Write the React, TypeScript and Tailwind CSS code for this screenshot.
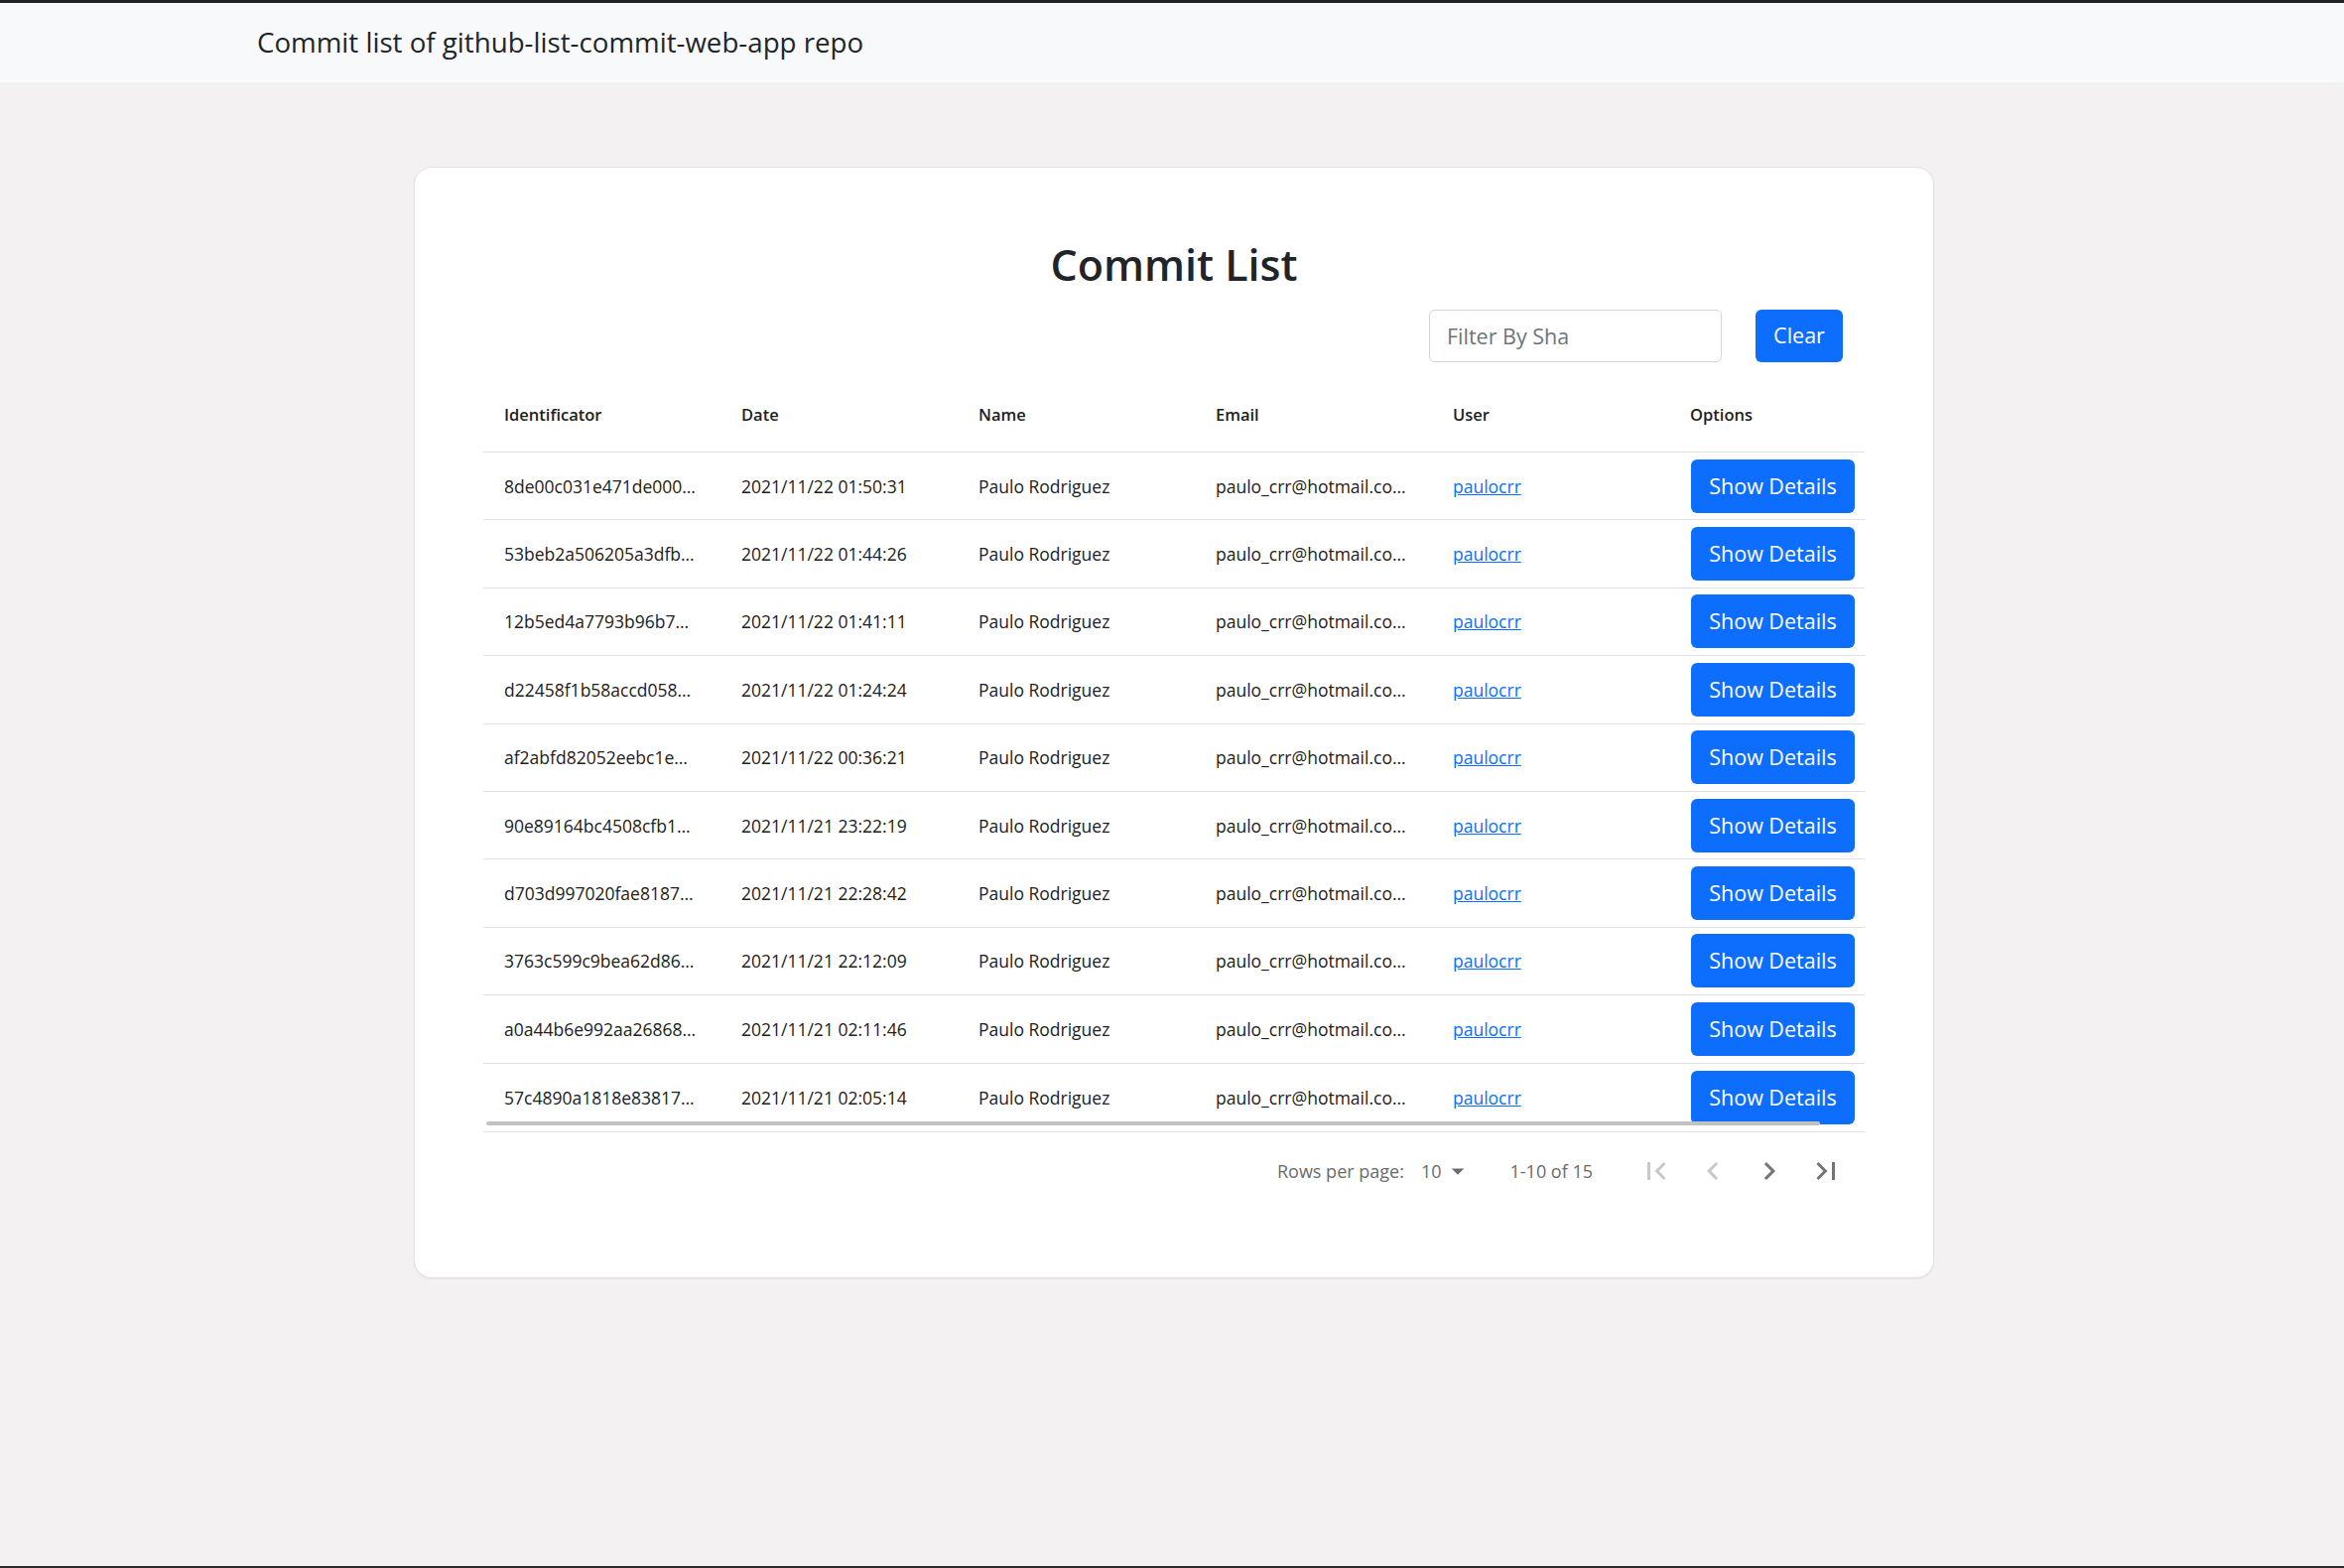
import React from 'react';

type Commit = {
  sha: string;
  date: string;
};

const COMMITS: Commit[] = [
  { sha: '8de00c031e471de000…', date: '2021/11/22 01:50:31' },
  { sha: '53beb2a506205a3dfb…', date: '2021/11/22 01:44:26' },
  { sha: '12b5ed4a7793b96b7…', date: '2021/11/22 01:41:11' },
  { sha: 'd22458f1b58accd058…', date: '2021/11/22 01:24:24' },
  { sha: 'af2abfd82052eebc1e…', date: '2021/11/22 00:36:21' },
  { sha: '90e89164bc4508cfb1…', date: '2021/11/21 23:22:19' },
  { sha: 'd703d997020fae8187…', date: '2021/11/21 22:28:42' },
  { sha: '3763c599c9bea62d86…', date: '2021/11/21 22:12:09' },
  { sha: 'a0a44b6e992aa26868…', date: '2021/11/21 02:11:46' },
  { sha: '57c4890a1818e83817…', date: '2021/11/21 02:05:14' },
];

const HEADERS = ['Identificator', 'Date', 'Name', 'Email', 'User', 'Options'];

const PageIcon = ({ d, disabled }: { d: string; disabled?: boolean }) => (
  <button className="w-[57px] h-[57px] flex items-center justify-center">
    <svg viewBox="0 0 24 24" className={`w-[36px] h-[36px] ${disabled ? 'fill-[#c9c9c9]' : 'fill-[#757575]'}`}>
      <path d={d} />
    </svg>
  </button>
);

export default function App() {
  return (
    <div className="w-full h-[1580px] bg-[#f3f1f2] flex flex-col font-['Open_Sans',sans-serif] text-[#212529]">
      <div className="h-[3px] bg-[#222222]" />
      <nav className="h-[80px] bg-[#f8f9fa] flex items-center pl-[259px]">
        <span className="text-[27.7px]">Commit list of github-list-commit-web-app repo</span>
      </nav>

      <main className="flex-1 pt-[85px] pl-[4px]">
        <div className="mx-auto w-[1532px] bg-white border border-[#e2e2e2] rounded-[18px] shadow-[0_1px_2px_rgba(0,0,0,0.06)] px-[69px] pt-[69px] pb-[67px]">
          <h1 className="h-[58px] leading-[58px] text-center text-[43px] font-semibold text-[#212529]">Commit List</h1>

          <div className="mt-[16px] flex justify-end items-center gap-[34px] pr-[22px]">
            <input
              placeholder="Filter By Sha"
              className="w-[295px] h-[53px] border border-[#ced4da] rounded-[6px] px-[17px] text-[21.5px] text-[#212529] placeholder:text-[#6c757d] outline-none"
            />
            <button className="w-[88px] h-[53px] bg-[#0d6efd] rounded-[6px] text-white text-[21.5px]">Clear</button>
          </div>

          <div className="mt-[13px] relative overflow-hidden">
            <div className="w-[1434px]">
              <div className="grid grid-cols-[repeat(6,239px)] h-[78px] pt-[3px] items-center border-b border-[#e0e0e0] text-[16.5px] font-semibold text-[#212121]">
                {HEADERS.map(h => (
                  <div key={h} className="px-[21px]">{h}</div>
                ))}
              </div>
              {COMMITS.map((c, i) => (
                <div
                  key={c.sha}
                  className={`grid grid-cols-[repeat(6,239px)] h-[68.4px] items-center text-[17.5px] text-[#212121] ${i < COMMITS.length - 1 ? 'border-b border-[#e0e0e0]' : ''}`}
                >
                  <div className="px-[21px] whitespace-nowrap">{c.sha}</div>
                  <div className="px-[21px] whitespace-nowrap">{c.date}</div>
                  <div className="px-[21px] whitespace-nowrap">Paulo Rodriguez</div>
                  <div className="px-[21px] whitespace-nowrap">paulo_crr@hotmail.co…</div>
                  <div className="px-[21px]">
                    <a href="#" className="text-[#0d6efd] underline">paulocrr</a>
                  </div>
                  <div className="pl-[22px]">
                    <button className="w-[165px] h-[54px] bg-[#0d6efd] rounded-[6px] text-white text-[21.5px]">Show Details</button>
                  </div>
                </div>
              ))}
            </div>
            <div className="absolute left-[3px] bottom-[6px] w-[1344px] h-[4px] rounded-full bg-[#c1c1c1]" />
          </div>

          <div className="h-[80px] border-t border-[#e0e0e0] flex items-center justify-end pr-[11px] text-[18px] text-[#6b6b6b]">
            <span>Rows per page:</span>
            <div className="ml-[17px] flex items-center">
              <span>10</span>
              <svg viewBox="0 0 24 24" className="w-[30px] h-[30px] fill-[#6b6b6b] ml-[1px]">
                <path d="M7 10l5 5 5-5z" />
              </svg>
            </div>
            <span className="ml-[38px] mr-[35px]">1-10 of 15</span>
            <PageIcon d="M18.41 16.59L13.82 12l4.59-4.59L17 6l-6 6 6 6zM6 6h2v12H6z" disabled />
            <PageIcon d="M15.41 7.41L14 6l-6 6 6 6 1.41-1.41L10.83 12z" disabled />
            <PageIcon d="M10 6L8.59 7.41 13.17 12l-4.58 4.59L10 18l6-6z" />
            <PageIcon d="M5.59 7.41L10.18 12l-4.59 4.59L7 18l6-6-6-6zM16 6h2v12h-2z" />
          </div>
        </div>
      </main>
      <div className="h-[2px] bg-[#2a2a2a]" />
    </div>
  );
}
